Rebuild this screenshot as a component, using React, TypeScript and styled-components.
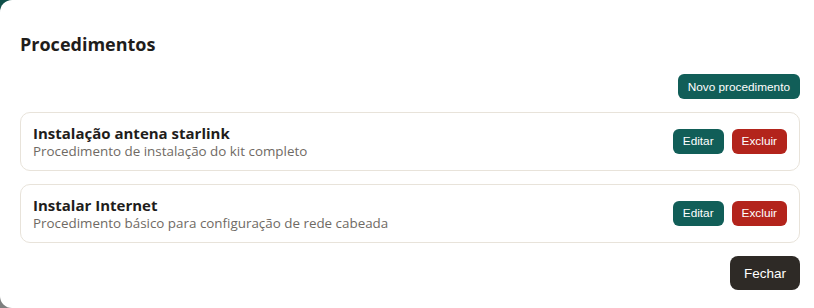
import React from "react";
import styled, { createGlobalStyle } from "styled-components";

const GlobalStyle = createGlobalStyle`
  html, body {
    margin: 0;
    padding: 0;
    height: 100%;
  }
  body {
    background: linear-gradient(180deg, #0f4f49 0%, #3c5a57 45%, #7f7f7f 100%);
    font-family: "Open Sans", "Noto Sans", sans-serif;
    overflow: hidden;
  }
  #root {
    height: 100%;
  }
`;

const Modal = styled.div`
  box-sizing: border-box;
  height: 100vh;
  background: #ffffff;
  border-radius: 12px 0 0 12px;
  padding: 32px 14px 0 20px;
  display: flex;
  flex-direction: column;
`;

const Title = styled.h2`
  margin: 0;
  font-size: 18px;
  line-height: 24px;
  font-weight: 700;
  color: #1f1d1b;
`;

const Toolbar = styled.div`
  display: flex;
  justify-content: flex-end;
  margin-top: 18px;
`;

const Button = styled.button<{ $tone: "teal" | "red" | "dark"; $size?: "sm" | "md" }>`
  border: none;
  cursor: pointer;
  font-family: "Liberation Sans", Arial, sans-serif;
  color: #ffffff;
  border-radius: ${(p) => (p.$size === "md" ? "8px" : "6px")};
  font-size: ${(p) => (p.$size === "md" ? "13.5px" : "11.8px")};
  height: ${(p) => (p.$size === "md" ? "34px" : "25px")};
  padding: ${(p) => (p.$size === "md" ? "0 14px" : "0 10px")};
  background: ${(p) =>
    p.$tone === "teal" ? "#115e58" : p.$tone === "red" ? "#b3241c" : "#2e2a26"};
`;

const List = styled.div`
  display: flex;
  flex-direction: column;
  gap: 13px;
  margin-top: 13px;
`;

const Card = styled.div`
  display: flex;
  align-items: center;
  justify-content: space-between;
  border: 1px solid #e8e3da;
  border-radius: 10px;
  padding: 10px 12px 11px 12px;
`;

const Info = styled.div`
  display: flex;
  flex-direction: column;
`;

const CardTitle = styled.div`
  font-size: 15px;
  line-height: 20px;
  font-weight: 700;
  color: #1f1d1b;
`;

const CardText = styled.div`
  font-size: 13.4px;
  line-height: 16px;
  color: #6f6a64;
`;

const Actions = styled.div`
  display: flex;
  gap: 8px;
`;

const Footer = styled.div`
  display: flex;
  justify-content: flex-end;
  margin-top: 13px;
`;

interface Procedimento {
  id: number;
  nome: string;
  descricao: string;
}

const procedimentos: Procedimento[] = [
  {
    id: 1,
    nome: "Instalação antena starlink",
    descricao: "Procedimento de instalação do kit completo",
  },
  {
    id: 2,
    nome: "Instalar Internet",
    descricao: "Procedimento básico para configuração de rede cabeada",
  },
];

const App = () => {
  return (
    <>
      <GlobalStyle />
      <Modal>
        <Title>Procedimentos</Title>
        <Toolbar>
          <Button $tone="teal">Novo procedimento</Button>
        </Toolbar>
        <List>
          {procedimentos.map((p) => (
            <Card key={p.id}>
              <Info>
                <CardTitle>{p.nome}</CardTitle>
                <CardText>{p.descricao}</CardText>
              </Info>
              <Actions>
                <Button $tone="teal">Editar</Button>
                <Button $tone="red">Excluir</Button>
              </Actions>
            </Card>
          ))}
        </List>
        <Footer>
          <Button $tone="dark" $size="md">
            Fechar
          </Button>
        </Footer>
      </Modal>
    </>
  );
};

export default App;
